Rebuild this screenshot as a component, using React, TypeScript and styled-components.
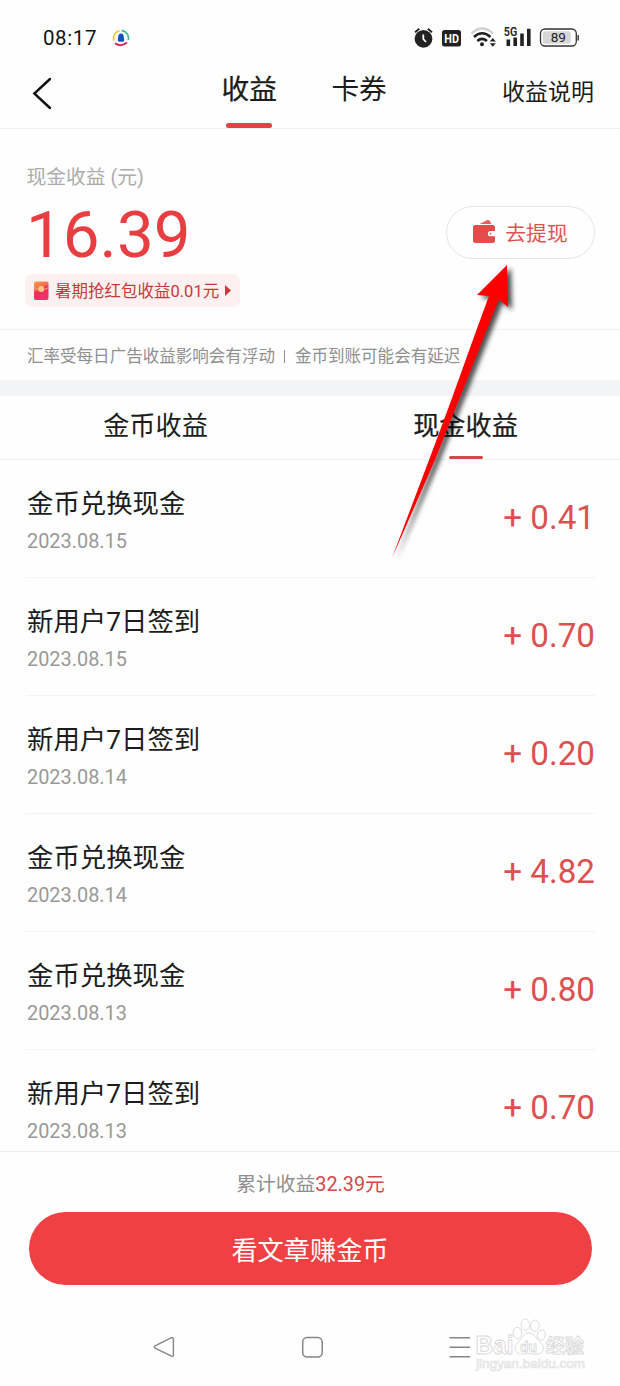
import React from 'react';
import styled, { createGlobalStyle } from 'styled-components';

const Global = createGlobalStyle`
  * { box-sizing: border-box; }
  body {
    margin: 0;
    background: #fefefe;
    font-family: Roboto, "Noto Sans CJK SC", sans-serif;
    font-weight: 400;
    color: #1c1c1c;
  }
`;

const Screen = styled.div`
  position: relative;
  width: 620px;
  height: 1386px;
  overflow: hidden;
  display: flex;
  flex-direction: column;
  background: #fefefe;
`;

const StatusBar = styled.div`
  height: 62px;
  padding: 14px 40px 0 43px;
  display: flex;
  align-items: center;
  justify-content: space-between;
`;

const StatusGroup = styled.div<{ $gap: number }>`
  display: flex;
  align-items: center;
  gap: ${(p) => p.$gap}px;
`;

const Clock = styled.span`
  font-size: 20.5px;
  line-height: 24px;
  font-weight: 450;
  letter-spacing: 0.6px;
  color: #111;
`;

const Header = styled.header`
  height: 67px;
  padding: 0 26px 0 32px;
  display: flex;
  border-bottom: 1px solid #efefef;
`;

const BackIcon = styled.svg`
  width: 20px;
  height: 34px;
  margin-top: 14px;
`;

const HeaderTabs = styled.nav`
  display: flex;
  gap: 54.5px;
  margin-left: 169.5px;
`;

const HeaderTab = styled.div<{ $active?: boolean }>`
  height: 66px;
  padding-top: 8px;
  display: flex;
  flex-direction: column;
  align-items: center;
  justify-content: space-between;
  font-size: 27.7px;
  line-height: 40px;
  -webkit-text-stroke: ${(p) => (p.$active ? '0.25px currentColor' : '0')};
`;

const Underline = styled.i<{ $w: number; $h: number; $color: string }>`
  display: block;
  width: ${(p) => p.$w}px;
  height: ${(p) => p.$h}px;
  border-radius: ${(p) => p.$h / 2}px;
  background: ${(p) => p.$color};
`;

const HeaderLink = styled.span`
  margin-left: auto;
  padding-top: 11px;
  font-size: 23px;
  line-height: 40px;
`;

const Summary = styled.section`
  height: 201px;
  padding: 34px 25px 0 25px;
  display: flex;
  justify-content: space-between;
  border-bottom: 1px solid #f1f1f1;
`;

const Balance = styled.div`
  display: flex;
  flex-direction: column;
  align-items: flex-start;
`;

const BalanceLabel = styled.div`
  font-size: 19.8px;
  line-height: 30px;
  color: #acacac;
  padding-left: 1.5px;
`;

const BalanceValue = styled.div`
  height: 81px;
  padding-left: 1px;
  font-size: 65.5px;
  line-height: 83px;
  color: #e83d41;
  white-space: nowrap;
`;

const Chip = styled.div`
  height: 33px;
  width: 215px;
  padding: 0 8px;
  display: flex;
  align-items: center;
  border-radius: 7px;
  background: #fdf0f0;
  color: #c9393c;
  font-size: 16.5px;
  line-height: 32px;
  white-space: nowrap;
`;

const ChipText = styled.span`
  margin: 0 6px 0 6px;
  padding-top: 2px;
`;

const WithdrawButton = styled.button`
  width: 149px;
  height: 53px;
  margin-top: 43px;
  padding: 0 1px 1px 0;
  display: flex;
  align-items: center;
  justify-content: center;
  gap: 9px;
  border: 1.5px solid #e4e4e4;
  border-radius: 27px;
  background: #fefefe;
  font: inherit;
  font-size: 20.8px;
  color: #dc5452;
`;

const Note = styled.div`
  height: 50px;
  padding: 11px 27px 0;
  display: flex;
  align-items: flex-start;
  font-size: 16.55px;
  line-height: 32px;
  color: #8f8f8f;
  white-space: nowrap;
`;

const NoteBar = styled.i`
  width: 1px;
  height: 13px;
  margin: 9px 10px 0 9px;
  background: #8f8f8f;
`;

const Divider = styled.div`
  height: 16px;
  background: #f2f4f5;
`;

const Segments = styled.div`
  height: 64px;
  display: grid;
  grid-template-columns: 1fr 1fr;
  border-bottom: 1px solid #f1f1f1;
`;

const Segment = styled.div<{ $active?: boolean }>`
  height: 63px;
  padding-top: 10px;
  padding-left: 1px;
  display: flex;
  flex-direction: column;
  align-items: center;
  justify-content: space-between;
  font-size: 26.2px;
  line-height: 40px;
  -webkit-text-stroke: ${(p) => (p.$active ? '0.25px currentColor' : '0')};
`;

const List = styled.ul`
  height: 691px;
  margin: 0;
  padding: 0 25px 0 26px;
  overflow: hidden;
  list-style: none;
`;

const Row = styled.li`
  height: 118px;
  padding: 24px 0 0 1px;
  display: flex;
  justify-content: space-between;
  border-bottom: 1px solid #f3f3f3;
`;

const RowTitle = styled.div`
  font-size: 26.4px;
  line-height: 40px;
`;

const RowDate = styled.div`
  margin-top: 3px;
  font-size: 19.9px;
  line-height: 30px;
  color: #999;
`;

const Amount = styled.div`
  padding-top: 14px;
  font-size: 33.2px;
  line-height: 40px;
  color: #db5150;
`;

const Footer = styled.footer`
  height: 157px;
  padding: 17px 28px 0 29px;
  border-top: 1px solid #ececec;
`;

const Total = styled.div`
  height: 43px;
  font-size: 19.8px;
  line-height: 32px;
  text-align: center;
  color: #8f8f8f;
`;

const TotalValue = styled.span`
  color: #d2494a;
`;

const EarnButton = styled.button`
  display: block;
  width: 563px;
  height: 73px;
  padding: 0 1px 0 0;
  border: 0;
  border-radius: 37px;
  background: #ef4143;
  color: #fff;
  font: inherit;
  font-size: 26.2px;
`;

const SystemNav = styled.div`
  height: 78px;
  padding: 27px 0 0 152px;
  display: flex;
`;

const NavIcon = styled.svg<{ $ml: number }>`
  width: 24px;
  height: 24px;
  margin-left: ${(p) => p.$ml}px;
`;

const Arrow = styled.svg`
  position: absolute;
  left: 380px;
  top: 255px;
  width: 150px;
  height: 320px;
  filter: drop-shadow(4px 3px 2.5px rgba(0, 0, 0, 0.7));
  pointer-events: none;
`;

const Watermark = styled.svg`
  position: absolute;
  left: 470px;
  top: 1310px;
  width: 130px;
  height: 70px;
`;

const records = [
  ['金币兑换现金', '2023.08.15', '0.41'],
  ['新用户7日签到', '2023.08.15', '0.70'],
  ['新用户7日签到', '2023.08.14', '0.20'],
  ['金币兑换现金', '2023.08.14', '4.82'],
  ['金币兑换现金', '2023.08.13', '0.80'],
  ['新用户7日签到', '2023.08.13', '0.70'],
];

const AppBadge = () => (
  <svg width="18" height="18" viewBox="0 0 18 18" fill="none" strokeWidth="1.7">
    <path d="M2 11.5A7.3 7.3 0 0 1 7.5 1.8" stroke="#f3c33c" />
    <path d="M9.5 1.7A7.3 7.3 0 0 1 16.2 11" stroke="#3dbb9b" />
    <path d="M3 14.2Q9 18.5 15 13.6" stroke="#d42a5c" strokeWidth="2" />
    <path d="M9 4.5C6.8 4.5 6.2 6.3 6.2 8.2L5.7 11.3L6.8 12.8H11.2L12.3 11.3L11.8 8.2C11.8 6.3 11.2 4.5 9 4.5Z" fill="#1550c0" />
  </svg>
);

const StatusIcons = () => (
  <svg width="168" height="24" viewBox="412 26 168 24" fill="none" fontFamily="Roboto, sans-serif">
    <circle cx="423.5" cy="38.8" r="8.9" fill="#222" />
    <path d="M415 32.2L419.3 28.7M427.8 28.7L432 32.2" stroke="#222" strokeWidth="1.8" />
    <path d="M423.3 34.5V39L426 42" stroke="#fff" strokeWidth="1.8" />
    <rect x="442" y="30" width="19" height="16.5" rx="2.5" fill="#222" />
    <text x="444.3" y="43" fontSize="13" fontWeight="700" fill="#fff" textLength="14.6" lengthAdjust="spacingAndGlyphs">HD</text>
    <path d="M471.5 33.5Q482 23.5 493 33.5" stroke="#d2d2d2" strokeWidth="2.5" />
    <path d="M474 37Q482 29.5 490.5 37" stroke="#222" strokeWidth="2.6" />
    <path d="M477.3 41Q482 36.8 487 41" stroke="#222" strokeWidth="2.6" />
    <circle cx="482" cy="44.3" r="2" fill="#222" />
    <path d="M489.8 41.6L492.8 38L495.8 41.6ZM489.8 43.2L492.8 46.8L495.8 43.2Z" fill="#222" />
    <text x="503.8" y="36.3" fontSize="12" fontWeight="600" fill="#222" textLength="13.4" lengthAdjust="spacingAndGlyphs">5G</text>
    <path d="M508.3 39.5V46M515.2 37.5V46M522 33.5V46M528.8 28.7V46" stroke="#222" strokeWidth="3.6" />
    <rect x="540.5" y="29" width="35.8" height="17" rx="4.5" fill="#fff" stroke="#333" strokeWidth="1.3" />
    <rect x="542.7" y="31.2" width="28" height="12.6" rx="2.5" fill="#d6d6d6" />
    <path d="M578.2 35V40.5" stroke="#333" strokeWidth="1.4" />
    <text x="558.3" y="42.4" fontSize="13.5" fontWeight="400" fill="#222" textAnchor="middle">89</text>
  </svg>
);

const EnvelopeIcon = () => (
  <svg width="16" height="20" viewBox="0 0 16 20">
    <defs>
      <linearGradient id="env" x1="0" y1="0" x2="0.4" y2="1">
        <stop offset="0" stopColor="#f6a04d" />
        <stop offset="0.45" stopColor="#f4694a" />
        <stop offset="0.55" stopColor="#ef3056" />
        <stop offset="1" stopColor="#f02f6c" />
      </linearGradient>
    </defs>
    <rect x="1" y="0.5" width="14.5" height="18.5" rx="2" fill="url(#env)" />
    <path d="M1 6.5Q8 11.5 15.5 6.5" fill="none" stroke="#f9a878" strokeWidth="1" />
    <circle cx="8.2" cy="8" r="3" fill="#fbc48a" />
  </svg>
);

const WalletIcon = () => (
  <svg width="24" height="26" viewBox="0 0 24 26" fill="#e64b4b">
    <path d="M7.5 5L15 1.3Q17.5 .5 18.3 2.8L19.3 5Z" opacity=".9" />
    <path d="M3.5 6H20.5Q23 6 23 8.5V12H18.5A2.6 2.6 0 0 0 18.5 17.3H23V21.5Q23 24 20.5 24H3.5Q1 24 1 21.5V8.5Q1 6 3.5 6Z" />
    <path d="M17.6 13.6L20 14.7L17.6 15.8Z" />
  </svg>
);

export default function App() {
  return (
    <Screen>
      <Global />
      <StatusBar>
        <StatusGroup $gap={15}>
          <Clock>08:17</Clock>
          <AppBadge />
        </StatusGroup>
        <StatusIcons />
      </StatusBar>
      <Header>
        <BackIcon viewBox="0 0 20 34" fill="none" stroke="#111" strokeWidth="2.4" strokeLinecap="round">
          <path d="M18 3L2.3 17.5L18 32" />
        </BackIcon>
        <HeaderTabs>
          <HeaderTab $active>
            收益
            <Underline $w={46} $h={5} $color="#e44144" />
          </HeaderTab>
          <HeaderTab>卡券</HeaderTab>
        </HeaderTabs>
        <HeaderLink>收益说明</HeaderLink>
      </Header>
      <Summary>
        <Balance>
          <BalanceLabel>现金收益 (元)</BalanceLabel>
          <BalanceValue>16.39</BalanceValue>
          <Chip>
            <EnvelopeIcon />
            <ChipText>暑期抢红包收益0.01元</ChipText>
            <svg width="6" height="11" viewBox="0 0 6 11" fill="#c9393c">
              <path d="M0 0L6 5.5L0 11Z" />
            </svg>
          </Chip>
        </Balance>
        <WithdrawButton>
          <WalletIcon />
          去提现
        </WithdrawButton>
      </Summary>
      <Note>
        汇率受每日广告收益影响会有浮动
        <NoteBar />
        金币到账可能会有延迟
      </Note>
      <Divider />
      <Segments>
        <Segment>金币收益</Segment>
        <Segment $active>
          现金收益
          <Underline $w={34} $h={3} $color="#d04a4b" />
        </Segment>
      </Segments>
      <List>
        {records.map(([title, date, amount], i) => (
          <Row key={i}>
            <div>
              <RowTitle>{title}</RowTitle>
              <RowDate>{date}</RowDate>
            </div>
            <Amount>+ {amount}</Amount>
          </Row>
        ))}
      </List>
      <Footer>
        <Total>
          累计收益<TotalValue>32.39元</TotalValue>
        </Total>
        <EarnButton>看文章赚金币</EarnButton>
      </Footer>
      <SystemNav>
        <NavIcon $ml={0} viewBox="0 0 24 24" fill="none" stroke="#858585" strokeWidth="1.4" strokeLinejoin="round">
          <path d="M3 10.8L19.6 2.7Q21.4 2.2 21.4 4V20Q21.4 21.8 19.6 21.2L3 13.1Q1.6 12 3 10.8Z" />
        </NavIcon>
        <NavIcon $ml={124} viewBox="0 0 24 24" fill="none" stroke="#858585" strokeWidth="1.5">
          <rect x="2.7" y="2.5" width="19.5" height="19.5" rx="4.5" />
        </NavIcon>
        <NavIcon $ml={124} viewBox="0 0 24 24" fill="none" stroke="#858585" strokeWidth="1.6">
          <path d="M1.5 2.7H22M1.5 12.2H22M1.5 21.8H22" />
        </NavIcon>
      </SystemNav>
      <Arrow viewBox="380 255 150 320">
        <path d="M507 265L508 307L499 299.5C483 339 460 398 435 460L392 558L429 460C449 408 470 347 489 296L477 295Z" fill="#fe0000" />
      </Arrow>
      <Watermark viewBox="470 1310 130 70" fill="#fff" stroke="#d9d9d9" strokeWidth="0.9" fontFamily='"Liberation Sans", "Noto Sans CJK SC", sans-serif' fontWeight="700">
        <text x="475.5" y="1353.5" fontSize="25" textLength="38" lengthAdjust="spacingAndGlyphs">Bai</text>
        <ellipse cx="517.3" cy="1333" rx="4.3" ry="5.6" />
        <ellipse cx="525.3" cy="1324.7" rx="4.3" ry="5.6" />
        <ellipse cx="534.8" cy="1325.7" rx="4.3" ry="5.6" transform="rotate(10 534.8 1325.7)" />
        <ellipse cx="541.3" cy="1335" rx="4" ry="5.2" transform="rotate(15 541.3 1335)" />
        <path d="M528 1333C523 1334 522 1339 518 1342C512 1348 516 1355 523 1354Q529 1353 535 1354C543 1355 546 1348 541 1343C536 1339 535 1333 528 1333Z" />
        <text x="520" y="1351.5" fontSize="15" textLength="17" lengthAdjust="spacingAndGlyphs">du</text>
        <text x="546" y="1352.5" fontSize="19" textLength="38">经验</text>
        <text x="476" y="1368" fontSize="12.5" fontWeight="400" stroke="#e2e2e2" strokeWidth="0.7" textLength="109" lengthAdjust="spacingAndGlyphs">jingyan.baidu.com</text>
      </Watermark>
    </Screen>
  );
}
